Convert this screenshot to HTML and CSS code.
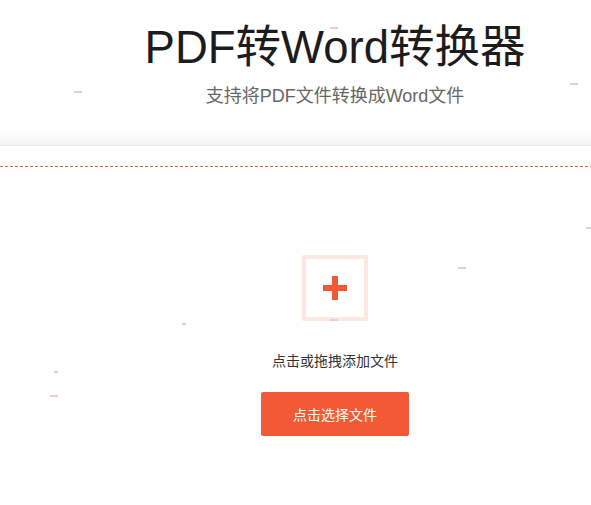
FILE: index.html
```html
<!DOCTYPE html>
<html lang="zh-CN">
<head>
<meta charset="utf-8">
<title>PDF转Word转换器</title>
<link rel="stylesheet" href="styles.css">
</head>
<body>
<div class="particles">
  <span class="dot d1"></span>
  <span class="dot d2"></span>
  <span class="dot d3"></span>
  <span class="dot d4"></span>
  <span class="dot d5"></span>
  <span class="dot d6"></span>
  <span class="dot d7"></span>
  <span class="dot d8"></span>
</div>
<header class="header">
  <div class="inner">
    <h1 class="title">PDF转Word转换器</h1>
    <p class="subtitle">支持将PDF文件转换成Word文件</p>
  </div>
  <div class="fade"></div>
</header>
<main class="main">
  <div class="dash"></div>
  <div class="inner upload">
    <div class="plus-box">
      <svg width="24" height="24" viewBox="0 0 24 24"><rect x="9" y="0" width="6" height="24" fill="#f15a34"/><rect x="0" y="9" width="24" height="6" fill="#f15a34"/></svg>
      <span class="dot d9"></span>
    </div>
    <p class="hint">点击或拖拽添加文件</p>
    <button class="btn">点击选择文件</button>
  </div>
</main>
</body>
</html>
```

FILE: styles.css
```css
html, body {
  margin: 0;
  padding: 0;
  background: #fff;
  overflow: hidden;
  width: 591px;
  height: 505px;
}
body {
  font-family: "Liberation Sans", "Noto Sans CJK SC", sans-serif;
  position: relative;
}
.inner {
  box-sizing: border-box;
  width: 591px;
  padding-left: 79px;
  display: flex;
  flex-direction: column;
  align-items: center;
}
.header {
  background: #fff;
  height: 146px;
  display: flex;
  flex-direction: column;
}
.header .inner {
  padding-top: 22px;
  flex: 1;
}
.title {
  margin: 0;
  font-size: 45.5px;
  font-weight: normal;
  line-height: 52px;
  height: 52px;
  color: #1c1c1c;
  white-space: nowrap;
}
.subtitle {
  margin: 10px 0 0;
  font-size: 18px;
  line-height: 24px;
  height: 24px;
  color: #666;
  white-space: nowrap;
}
.fade {
  height: 12px;
  background: linear-gradient(#ffffff, #f3f3f3);
  border-bottom: 1px solid #e9e9e9;
}
.dash {
  margin-top: 20px;
  height: 1px;
  background: repeating-linear-gradient(90deg, #f25c36 0 3px, transparent 3px 5px);
}
.upload {
  padding-top: 88px;
}
.plus-box {
  position: relative;
  width: 58px;
  height: 58px;
  border: 4px solid #fde7e2;
  border-radius: 2px;
  display: flex;
  align-items: center;
  justify-content: center;
}
.hint {
  margin: 30px 0 0;
  font-size: 14px;
  line-height: 20px;
  color: #333;
}
.btn {
  margin-top: 21px;
  width: 148px;
  height: 44px;
  border: none;
  border-radius: 2px;
  background: #f15a34;
  color: #fff;
  font-family: inherit;
  font-size: 14px;
  cursor: pointer;
}
.particles {
  position: absolute;
  left: 0;
  top: 0;
  width: 591px;
  height: 505px;
  pointer-events: none;
  z-index: 5;
}
.dot {
  position: absolute;
  height: 2px;
  width: 8px;
  background: #f8c1f3;
}
.d1 { left: 74px; top: 91px; }
.d2 { left: 330px; top: 27px; }
.d3 { left: 570px; top: 83px; }
.d4 { left: 586px; top: 227px; width: 5px; }
.d5 { left: 458px; top: 267px; }
.d6 { left: 182px; top: 323px; width: 4px; }
.d7 { left: 54px; top: 371px; width: 4px; }
.d8 { left: 50px; top: 395px; }
.d9 { left: 24px; bottom: -4px; }
```
